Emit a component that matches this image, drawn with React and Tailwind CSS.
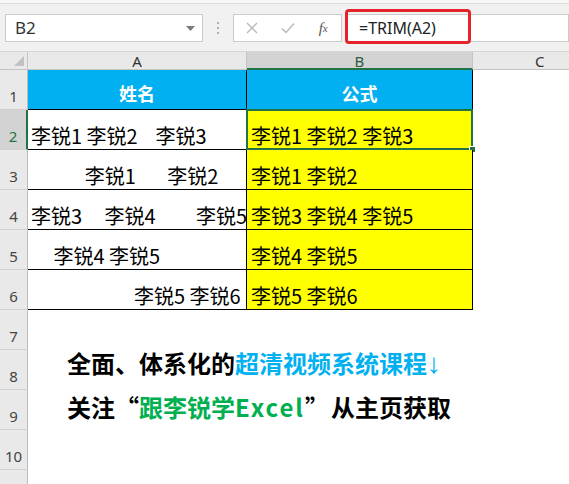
const COL_A = [
  '李锐1 李锐2    李锐3',
  '            李锐1       李锐2',
  '李锐3     李锐4         李锐5',
  '     李锐4 李锐5',
  '                       李锐5 李锐6',
];

const COL_B = ['李锐1 李锐2 李锐3', '李锐1 李锐2', '李锐3 李锐4 李锐5', '李锐4 李锐5', '李锐5 李锐6'];

function FormulaBar() {
  return (
    <div className="relative h-[52px] border-b border-[#d4d4d4] bg-[#f1f1f1]">
      <div className="h-[4px] border-b border-[#dddddd] bg-[#f7f7f7]" />
      <div className="mt-[10px] flex h-[28px] items-center">
        {/* name box */}
        <div className="ml-[5px] flex h-full w-[198px] items-center justify-between border border-[#cacaca] bg-white pl-[9px] pr-[7px]">
          <span className="text-[17px] text-[#333]">B2</span>
          <svg width="9" height="5" viewBox="0 0 9 5">
            <path d="M0 0h9L4.5 5z" fill="#7a7a7a" />
          </svg>
        </div>
        <div className="flex w-[30px] flex-col items-center gap-[3px]">
          <span className="h-[2px] w-[2px] bg-[#b0b0b0]" />
          <span className="h-[2px] w-[2px] bg-[#b0b0b0]" />
          <span className="h-[2px] w-[2px] bg-[#b0b0b0]" />
        </div>
        {/* cancel / enter / fx */}
        <div className="flex h-full w-[109px] items-center border border-[#cacaca] bg-white">
          <div className="flex w-[36px] justify-center">
            <svg width="12" height="12" viewBox="0 0 12 12">
              <path d="M1 1l10 10M11 1L1 11" stroke="#b9b9b9" strokeWidth="1.3" />
            </svg>
          </div>
          <div className="flex w-[36px] justify-center">
            <svg width="14" height="12" viewBox="0 0 14 12">
              <path d="M1 6.5l4 4L13 1.5" stroke="#b9b9b9" strokeWidth="1.5" fill="none" />
            </svg>
          </div>
          <div className="flex w-[36px] justify-center font-['Liberation_Serif',serif] text-[15px] italic text-[#555]">
            f<span className="mt-[3px] text-[11px]">x</span>
          </div>
        </div>
        <div className="ml-[4px] flex h-full flex-1 items-center border border-[#cacaca] bg-white pl-[12px] text-[16px] text-[#222]">
          =TRIM(A2)
        </div>
      </div>
      {/* red highlight annotation */}
      <div className="absolute left-[345px] top-[9px] h-[35px] w-[126px] rounded-[4px] border-[3px] border-[#e3242b]" />
    </div>
  );
}

function RowHead({ n, label }) {
  const sel = n === 2;
  return (
    <div
      className={`flex h-[40px] items-end justify-center border-b border-[#d0d0d0] pb-[2px] text-[15px] ${
        sel ? 'border-r-2 border-r-[#217346] bg-[#d3d3d3] text-[#217346]' : 'border-r border-r-[#bdbdbd] bg-[#e9e9e9] text-[#444]'
      }`}
    >
      {label}
    </div>
  );
}

export default function App() {
  return (
    <div className="relative h-[484px] w-[569px] overflow-hidden bg-white font-['Noto_Sans',sans-serif]">
      <FormulaBar />

      <div className="flex">
        {/* row headers */}
        <div className="flex w-[28px] shrink-0 flex-col">
          <div className="relative h-[18px] border-b border-r border-[#c4c4c4] bg-[#e9e9e9]">
            <svg className="absolute bottom-[3px] right-[3px]" width="10" height="10" viewBox="0 0 10 10">
              <path d="M10 0v10H0z" fill="#c2c2c2" />
            </svg>
          </div>
          {[1, 2, 3, 4, 5, 6, 7, 8, 9, 10, 11].map((n) => (
            <RowHead key={n} n={n} label={n < 11 ? n : ''} />
          ))}
        </div>

        <div className="flex flex-1 flex-col">
          {/* column headers */}
          <div className="flex h-[18px] text-[15px] leading-[18px]">
            <div className="w-[219px] border-b border-r border-[#c4c4c4] bg-[#e9e9e9] text-center text-[#333]">A</div>
            <div className="w-[226px] border-b-2 border-r border-b-[#217346] border-r-[#c4c4c4] bg-[#d3d3d3] text-center text-[#2c5c40]">B</div>
            <div className="flex-1 border-b border-[#c4c4c4] bg-[#e9e9e9] pl-[62px] text-[#333]">C</div>
          </div>

          {/* table */}
          <div className="font-['Noto_Sans_CJK_SC',sans-serif]">
            <div className="flex h-[40px] w-[445px] border-b border-black bg-[#00b0f0] text-[18px] font-bold leading-[22px] text-white">
              <div className="flex w-[219px] items-end justify-center border-r border-black pb-[5px]">姓名</div>
              <div className="flex w-[226px] items-end justify-center border-r border-black pb-[5px]">公式</div>
            </div>
            {COL_A.map((a, i) => (
              <div key={i} className="flex h-[40px] w-[445px] border-b border-black text-[20px] leading-[24px] text-black">
                <div className="flex w-[219px] items-end whitespace-pre border-r border-black pb-[1px] pl-[3px]">{a}</div>
                <div className="relative flex w-[226px] items-end whitespace-pre border-r border-black bg-[#ffff00] pb-[1px] pl-[4px]">
                  {COL_B[i]}
                  {i === 0 && (
                    <>
                      <div className="pointer-events-none absolute -left-[1px] -top-[1px] h-[41px] w-[227px] border-2 border-[#217346]" />
                      <div className="absolute -bottom-[4px] -right-[4px] h-[7px] w-[7px] border border-white bg-[#217346]" />
                    </>
                  )}
                </div>
              </div>
            ))}
          </div>

          {/* promo text */}
          <div className="pl-[39px] pt-[31px] font-['Noto_Sans_CJK_SC',sans-serif] text-[24px] font-bold leading-[44px] text-black">
            <div>
              全面、体系化的
              <span className="text-[#00b0f0]">
                超清视频系统课程<span className="font-['Liberation_Sans',sans-serif] text-[28px] leading-none">↓</span>
              </span>
            </div>
            <div>
              关注<span className="inline-block w-[24px] text-right">“</span>
              <span className="text-[#00b050]">
                跟李锐学<span className="tracking-[2px]">Excel</span>
              </span>
              <span className="inline-block w-[26px] text-left">”</span>从主页获取
            </div>
          </div>
        </div>
      </div>
    </div>
  );
}
